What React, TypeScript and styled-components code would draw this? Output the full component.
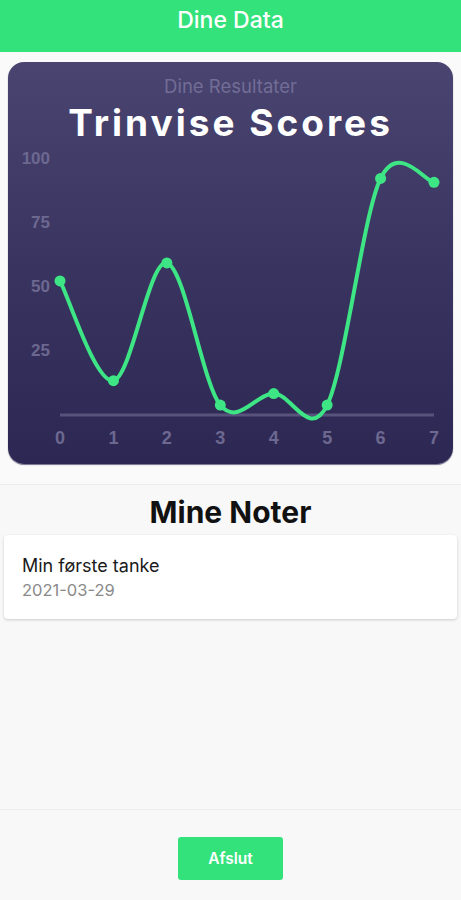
import React from "react";
import styled, { createGlobalStyle } from "styled-components";

const Global = createGlobalStyle`
  html, body { margin: 0; padding: 0; background: #f8f8f8; }
  body { font-family: "Inter", "Roboto", "Liberation Sans", sans-serif; }
  #root { min-height: 900px; }
`;

const Page = styled.div`
  width: 461px;
  height: 900px;
  display: flex;
  flex-direction: column;
  background: #f8f8f8;
  overflow: hidden;
`;

const Header = styled.header`
  height: 52px;
  flex: none;
  background: #33e27b;
  display: flex;
  align-items: center;
  justify-content: center;
  padding-bottom: 12px;
  box-sizing: border-box;
  box-shadow: 0 1px 3px rgba(0, 0, 0, 0.08);
  color: #ffffff;
  font-size: 23px;
  font-weight: 500;
`;

const Top = styled.section`
  flex: none;
  padding: 10px 8px 20px;
  border-bottom: 1px solid #ececec;
  background: #fafafa;
`;

const Card = styled.div`
  height: 402px;
  border-radius: 16px;
  background: linear-gradient(180deg, #4a4470 0%, #3a3560 50%, #2d2853 100%);
  box-shadow: 0 1px 1px rgba(20, 15, 60, 0.6);
  display: flex;
  flex-direction: column;
  align-items: center;
  padding-top: 13px;
  box-sizing: border-box;
  overflow: hidden;
`;

const Subtitle = styled.div`
  font-size: 18.5px;
  line-height: 22px;
  color: #726d96;
`;

const Title = styled.div`
  margin-top: 4px;
  font-size: 37px;
  line-height: 44px;
  font-weight: 700;
  letter-spacing: 3px;
  color: #ffffff;
`;

const Chart = styled.svg`
  display: block;
  flex: none;
  margin-top: 3px;
`;

const Notes = styled.section`
  flex: 1;
  display: flex;
  flex-direction: column;
  padding: 8px 4px 0;
  border-bottom: 1px solid #ededed;
`;

const NotesTitle = styled.h2`
  margin: 0;
  text-align: center;
  font-size: 30px;
  line-height: 38px;
  font-weight: 700;
  color: #111111;
`;

const NoteCard = styled.div`
  margin-top: 4px;
  background: #ffffff;
  border-radius: 4px;
  box-shadow: 0 1px 3px rgba(0, 0, 0, 0.18);
  padding: 19px 18px 18px;
  display: flex;
  flex-direction: column;
  gap: 3px;
`;

const NoteTitle = styled.div`
  font-size: 18px;
  line-height: 23px;
  color: #1a1a1a;
`;

const NoteDate = styled.div`
  font-size: 16.5px;
  line-height: 21px;
  color: #8a8a8a;
`;

const Footer = styled.footer`
  height: 90px;
  flex: none;
  display: flex;
  justify-content: center;
  padding-top: 27px;
  box-sizing: border-box;
`;

const Button = styled.button`
  width: 105px;
  height: 43px;
  border: none;
  border-radius: 3px;
  background: #33e27b;
  color: #ffffff;
  font-family: inherit;
  font-size: 15.5px;
  font-weight: 600;
  cursor: pointer;
`;

const data = [52, 13, 59, 3.5, 8, 3.5, 92, 90.5];
const X0 = 52;
const STEP = 53.43;
const Y0 = 266;
const SCALE = 2.56;

const px = (i: number) => X0 + STEP * i;
const py = (v: number) => Y0 - SCALE * v;

type Pt = [number, number];

function catmullRomPath(pts: Pt[]) {
  let d = `M${pts[0][0]},${pts[0][1]}`;
  for (let i = 0; i < pts.length - 1; i++) {
    const p0 = pts[i - 1] ?? pts[i];
    const p1 = pts[i];
    const p2 = pts[i + 1];
    const p3 = pts[i + 2] ?? pts[i + 1];
    const c1x = p1[0] + (p2[0] - p0[0]) / 6;
    const c1y = p1[1] + (p2[1] - p0[1]) / 6;
    const c2x = p2[0] - (p3[0] - p1[0]) / 6;
    const c2y = p2[1] - (p3[1] - p1[1]) / 6;
    d += ` C${c1x},${c1y} ${c2x},${c2y} ${p2[0]},${p2[1]}`;
  }
  return d;
}

const points: Pt[] = data.map((v, i) => [px(i), py(v)]);
const linePath = catmullRomPath(points);

const LabelText = styled.text`
  font-family: "Liberation Sans", "Inter", sans-serif;
  font-weight: 700;
  fill: #6c6890;
`;

export default function App() {
  return (
    <>
      <Global />
      <Page>
        <Header>Dine Data</Header>
        <Top>
          <Card>
            <Subtitle>Dine Resultater</Subtitle>
            <Title>Trinvise Scores</Title>
            <Chart width={445} height={313} viewBox="0 0 445 313">
              {[100, 75, 50, 25].map((v) => (
                <LabelText
                  key={v}
                  x={42}
                  y={py(v)}
                  fontSize={17}
                  textAnchor="end"
                  dominantBaseline="central"
                >
                  {v}
                </LabelText>
              ))}
              <line
                x1={X0}
                x2={px(7)}
                y1={Y0 + 1}
                y2={Y0 + 1}
                stroke="#58537d"
                strokeWidth={3}
              />
              {data.map((_, i) => (
                <LabelText
                  key={i}
                  x={px(i)}
                  y={290}
                  fontSize={18}
                  textAnchor="middle"
                  dominantBaseline="central"
                >
                  {i}
                </LabelText>
              ))}
              <path
                d={linePath}
                fill="none"
                stroke="#3de585"
                strokeWidth={4}
                strokeLinecap="round"
              />
              {points.map(([x, y], i) => (
                <circle key={i} cx={x} cy={y} r={5.5} fill="#3de585" />
              ))}
            </Chart>
          </Card>
        </Top>
        <Notes>
          <NotesTitle>Mine Noter</NotesTitle>
          <NoteCard>
            <NoteTitle>Min første tanke</NoteTitle>
            <NoteDate>2021-03-29</NoteDate>
          </NoteCard>
        </Notes>
        <Footer>
          <Button>Afslut</Button>
        </Footer>
      </Page>
    </>
  );
}
